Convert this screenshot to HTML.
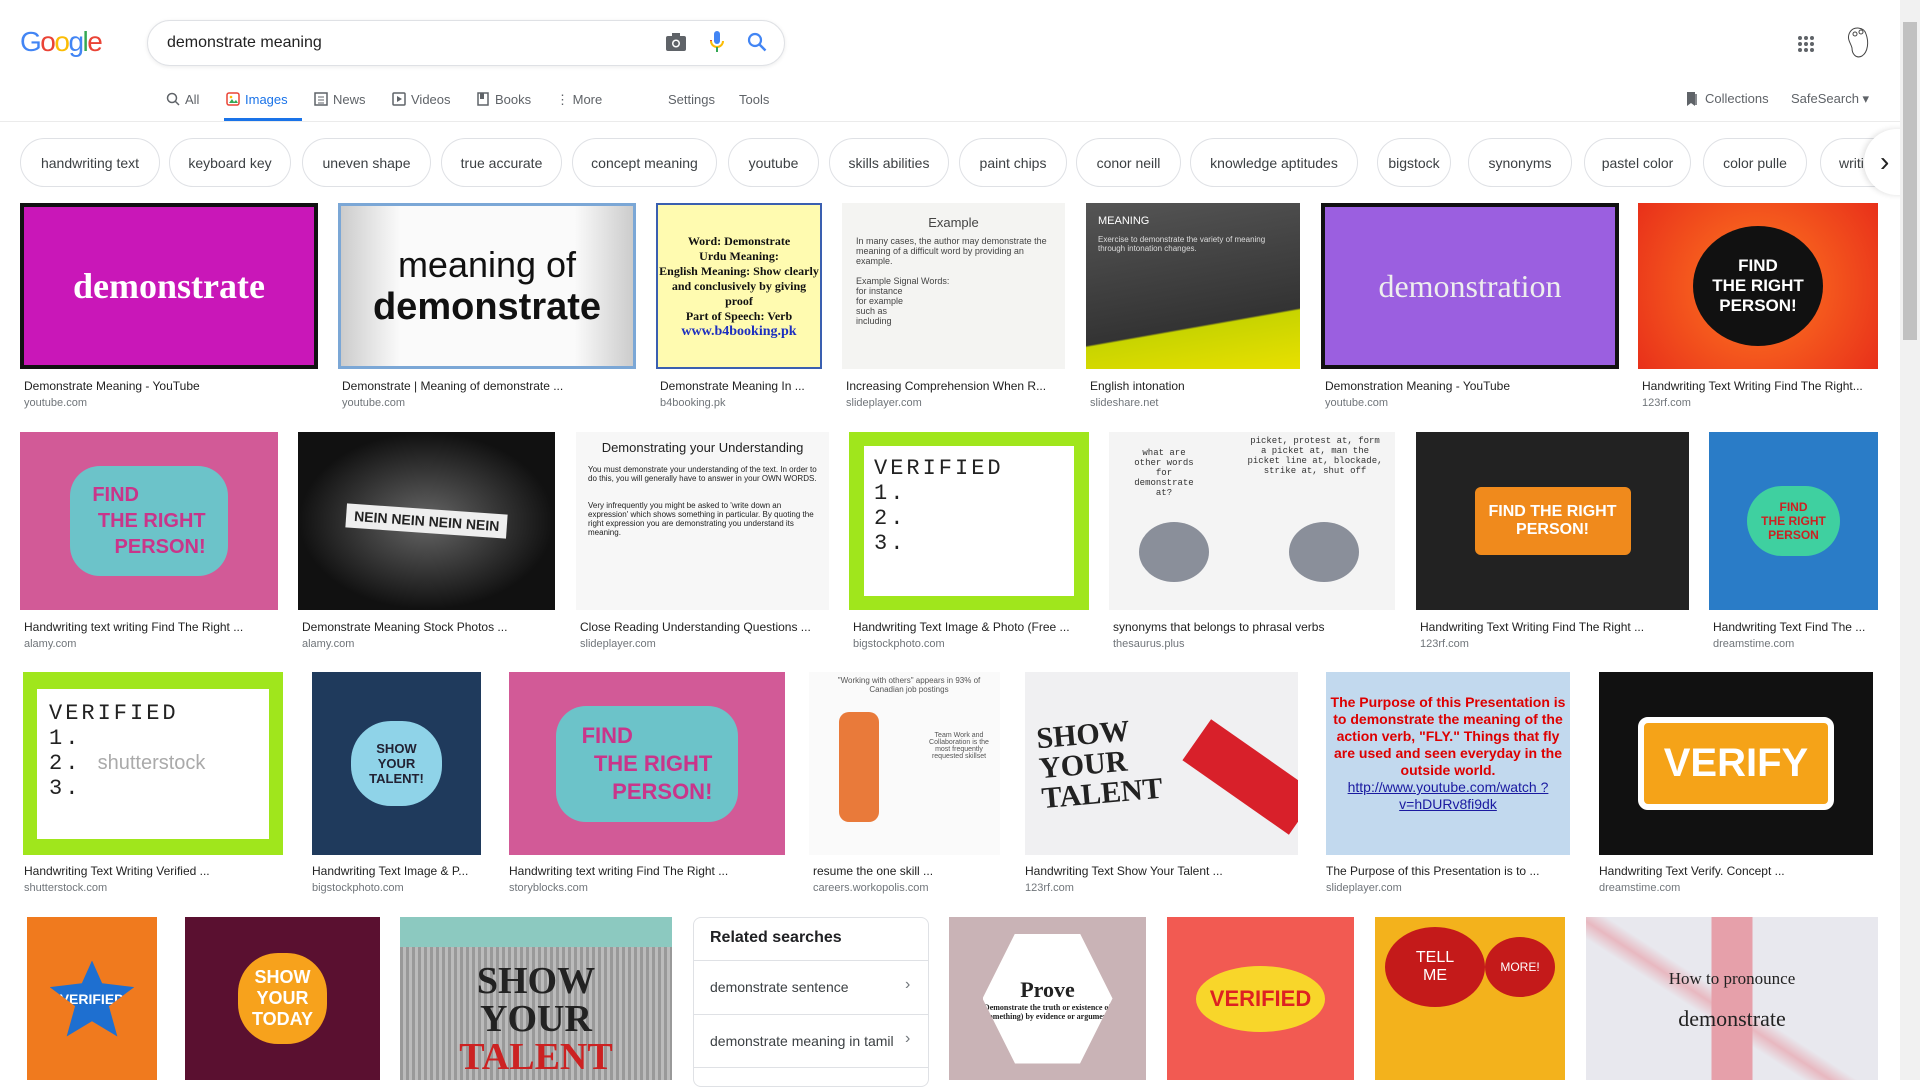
<!DOCTYPE html>
<html><head><meta charset="utf-8"><style>
*{margin:0;padding:0;box-sizing:border-box}
body{width:1920px;height:1080px;overflow:hidden;background:#fff;font-family:"Liberation Sans",Arial,sans-serif;position:relative}
.a{position:absolute}
.t{position:absolute;overflow:hidden;display:flex;align-items:center;justify-content:center;text-align:center}
.cap{position:absolute;font-size:12px;color:#222;white-space:nowrap;overflow:hidden}
.cap b{display:block;font-weight:normal;line-height:16px}
.cap i{display:block;font-style:normal;font-size:11px;color:#70757a;line-height:18px}
.chip{position:absolute;top:138px;height:49px;border:1px solid #dfe1e5;border-radius:25px;font-size:14px;color:#3c4043;display:flex;align-items:center;justify-content:center;background:#fff}
.tab{position:absolute;top:92px;font-size:13px;color:#5f6368}
</style></head><body>
<!-- header -->
<div class="a" style="left:20px;top:26px;font-size:28px;letter-spacing:-1.5px;font-family:'Liberation Sans',sans-serif"><span style="color:#4285f4">G</span><span style="color:#ea4335">o</span><span style="color:#fbbc05">o</span><span style="color:#4285f4">g</span><span style="color:#34a853">l</span><span style="color:#ea4335">e</span></div>
<div class="a" style="left:147px;top:20px;width:638px;height:46px;border:1px solid #dfe1e5;border-radius:24px;box-shadow:0 1px 4px rgba(0,0,0,.08)"></div>
<div class="a" style="left:167px;top:34px;font-size:16px;color:#222">demonstrate meaning</div>
<svg class="a" style="left:665px;top:32px" width="22" height="20" viewBox="0 0 22 20"><rect x="1" y="4" width="20" height="15" rx="2" fill="#5f6368"/><rect x="7" y="1" width="8" height="5" fill="#5f6368"/><circle cx="11" cy="11.5" r="4" fill="#fff"/><circle cx="11" cy="11.5" r="2.5" fill="#5f6368"/></svg>
<svg class="a" style="left:709px;top:30px" width="16" height="24" viewBox="0 0 16 24"><rect x="5" y="1" width="6" height="13" rx="3" fill="#4285f4"/><path d="M2 11a6 6 0 0 0 12 0" stroke="#fbbc05" stroke-width="2" fill="none"/><rect x="7" y="17" width="2" height="5" fill="#34a853"/><path d="M2 11v-1" stroke="#ea4335" stroke-width="2"/></svg>
<svg class="a" style="left:747px;top:32px" width="20" height="20" viewBox="0 0 20 20"><circle cx="8" cy="8" r="6" stroke="#4285f4" stroke-width="2.2" fill="none"/><path d="M12.5 12.5l6 6" stroke="#4285f4" stroke-width="2.4"/></svg>
<svg class="a" style="left:1797px;top:35px" width="18" height="18"><g fill="#5f6368"><circle cx="3" cy="3" r="2"/><circle cx="9" cy="3" r="2"/><circle cx="15" cy="3" r="2"/><circle cx="3" cy="9" r="2"/><circle cx="9" cy="9" r="2"/><circle cx="15" cy="9" r="2"/><circle cx="3" cy="15" r="2"/><circle cx="9" cy="15" r="2"/><circle cx="15" cy="15" r="2"/></g></svg>
<svg class="a" style="left:1842px;top:26px" width="30" height="34"><path d="M8 6c4-6 14-5 16 2 3 8 2 18-4 22-6 3-10-2-10-8-1-5-6-9-2-16z" fill="#fff" stroke="#444" stroke-width="1"/><circle cx="13" cy="8" r="2" fill="none" stroke="#444"/><circle cx="19" cy="6" r="2" fill="none" stroke="#444"/></svg>
<!-- tabs -->
<svg class="a" style="left:166px;top:92px" width="14" height="14"><circle cx="6" cy="6" r="4.5" stroke="#5f6368" stroke-width="1.5" fill="none"/><path d="M9 9l4 4" stroke="#5f6368" stroke-width="1.5"/></svg>
<div class="tab" style="left:185px">All</div>
<svg class="a" style="left:226px;top:92px" width="14" height="14"><rect x="1" y="1" width="12" height="12" rx="2" fill="none" stroke="#ea4335" stroke-width="1.5"/><path d="M3 11l3-4 2 3 2-2 2 3z" fill="#34a853"/><circle cx="5" cy="5" r="1.3" fill="#fbbc05"/></svg>
<div class="tab" style="left:245px;color:#1a73e8">Images</div>
<div class="a" style="left:224px;top:118px;width:78px;height:3px;background:#1a73e8"></div>
<svg class="a" style="left:314px;top:92px" width="14" height="14"><rect x="1" y="1" width="12" height="12" fill="none" stroke="#5f6368" stroke-width="1.5"/><path d="M4 5h6M4 8h6M4 11h6" stroke="#5f6368"/></svg>
<div class="tab" style="left:333px">News</div>
<svg class="a" style="left:392px;top:92px" width="14" height="14"><rect x="1" y="1" width="12" height="12" rx="1" fill="none" stroke="#5f6368" stroke-width="1.5"/><path d="M5 4l5 3-5 3z" fill="#5f6368"/></svg>
<div class="tab" style="left:411px">Videos</div>
<svg class="a" style="left:477px;top:92px" width="12" height="14"><rect x="1" y="1" width="10" height="12" fill="none" stroke="#5f6368" stroke-width="1.5"/><rect x="3" y="1" width="4" height="6" fill="#5f6368"/></svg>
<div class="tab" style="left:495px">Books</div>
<div class="tab" style="left:556px">&#8942; More</div>
<div class="tab" style="left:668px">Settings</div>
<div class="tab" style="left:739px">Tools</div>
<svg class="a" style="left:1686px;top:91px" width="12" height="16"><path d="M1 1h8v14l-4-3-4 3z" fill="#5f6368"/><path d="M10 3v11" stroke="#5f6368" stroke-width="1.5"/></svg>
<div class="tab" style="left:1705px;top:91px">Collections</div>
<div class="tab" style="left:1791px;top:91px">SafeSearch &#9662;</div>
<div class="a" style="left:0;top:121px;width:1900px;height:1px;background:#ebebeb"></div>
<!-- chips -->
<div class="chip" style="left:20px;width:140px">handwriting text</div>
<div class="chip" style="left:169px;width:122px">keyboard key</div>
<div class="chip" style="left:302px;width:129px">uneven shape</div>
<div class="chip" style="left:441px;width:121px">true accurate</div>
<div class="chip" style="left:572px;width:145px">concept meaning</div>
<div class="chip" style="left:728px;width:91px">youtube</div>
<div class="chip" style="left:829px;width:120px">skills abilities</div>
<div class="chip" style="left:959px;width:108px">paint chips</div>
<div class="chip" style="left:1076px;width:105px">conor neill</div>
<div class="chip" style="left:1190px;width:168px">knowledge aptitudes</div>
<div class="chip" style="left:1377px;width:74px">bigstock</div>
<div class="chip" style="left:1468px;width:104px">synonyms</div>
<div class="chip" style="left:1584px;width:107px">pastel color</div>
<div class="chip" style="left:1703px;width:104px">color pulle</div>
<div class="chip" style="left:1820px;width:80px;justify-content:flex-start;padding-left:18px">writi</div>
<div class="a" style="left:1864px;top:129px;width:50px;height:66px;border-radius:33px 0 0 33px;background:#fff;box-shadow:-2px 0 6px rgba(0,0,0,.12);font-size:28px;color:#222;line-height:66px;padding-left:16px">&#8250;</div>
<!-- scrollbar -->
<div class="a" style="left:1900px;top:0;width:20px;height:1080px;background:#f1f1f1"></div>
<div class="a" style="left:1903px;top:22px;width:14px;height:318px;background:#c1c1c1"></div>
<!-- row1 -->
<div class="t" style="left:20px;top:203px;width:298px;height:166px;background:#c917b8;border:4px solid #111;color:#fff;font:bold 36px 'Liberation Serif',serif">demonstrate</div>
<div class="t" style="left:338px;top:203px;width:298px;height:166px;background:linear-gradient(90deg,#ccc,#fafafa 20%,#fafafa 80%,#ccc);border:3px solid #7ba7d6;color:#111"><div style="font:36px 'Liberation Sans',sans-serif;line-height:42px">meaning of<br><b style="font-size:38px">demonstrate</b></div></div>
<div class="t" style="left:656px;top:203px;width:166px;height:166px;background:#fffbb0;border:2px solid #3a5fb0;color:#111"><div style="font:bold 12px 'Liberation Serif',serif;line-height:15px">Word: Demonstrate<br>Urdu Meaning:<br>English Meaning: Show clearly and conclusively by giving proof<br>Part of Speech: Verb<br><span style="color:#1d2fbf;font-size:14px">www.b4booking.pk</span></div></div>
<div class="t" style="left:842px;top:203px;width:223px;height:166px;background:#f4f4f2;color:#444;font-size:9px;align-items:flex-start;text-align:left;padding:12px 14px;flex-direction:column;justify-content:flex-start"><div style="font-size:13px;align-self:center;margin-bottom:6px">Example</div>In many cases, the author may demonstrate the meaning of a difficult word by providing an example.<br><br>Example Signal Words:<br>for instance<br>for example<br>such as<br>including</div>
<div class="t" style="left:1086px;top:203px;width:214px;height:166px;background:linear-gradient(170deg,#555 0%,#333 70%,#c8d400 71%,#e8e000);color:#ddd;font-size:8px;align-items:flex-start;justify-content:flex-start;text-align:left;padding:12px;flex-direction:column"><div style="font-size:11px;color:#fff;margin-bottom:8px">MEANING</div>Exercise to demonstrate the variety of meaning through intonation changes.</div>
<div class="t" style="left:1321px;top:203px;width:298px;height:166px;background:#9b5fe0;border:4px solid #111;color:#eee;font:32px 'Liberation Serif',serif">demonstration</div>
<div class="t" style="left:1638px;top:203px;width:240px;height:166px;background:radial-gradient(circle at 50% 50%,#ff7a20,#e8301a);"><div style="width:130px;height:120px;border-radius:50%;background:#111;color:#fff;font:bold 17px 'Liberation Sans';display:flex;align-items:center;justify-content:center">FIND<br>THE RIGHT<br>PERSON!</div></div>
<div class="cap" style="left:24px;top:378px;width:294px"><b>Demonstrate Meaning - YouTube</b><i>youtube.com</i></div>
<div class="cap" style="left:342px;top:378px;width:294px"><b>Demonstrate | Meaning of demonstrate ...</b><i>youtube.com</i></div>
<div class="cap" style="left:660px;top:378px;width:162px"><b>Demonstrate Meaning In ...</b><i>b4booking.pk</i></div>
<div class="cap" style="left:846px;top:378px;width:219px"><b>Increasing Comprehension When R...</b><i>slideplayer.com</i></div>
<div class="cap" style="left:1090px;top:378px;width:210px"><b>English intonation</b><i>slideshare.net</i></div>
<div class="cap" style="left:1325px;top:378px;width:294px"><b>Demonstration Meaning - YouTube</b><i>youtube.com</i></div>
<div class="cap" style="left:1642px;top:378px;width:236px"><b>Handwriting Text Writing Find The Right...</b><i>123rf.com</i></div>
<!-- row2 -->
<div class="t" style="left:20px;top:432px;width:258px;height:178px;background:#d25a97"><div style="background:#6cc3c9;color:#c9358a;font:bold 20px 'Liberation Sans';padding:16px 22px;border-radius:30px;text-align:left;line-height:26px">FIND<br>&nbsp;THE RIGHT<br>&nbsp;&nbsp;&nbsp;&nbsp;PERSON!</div></div>
<div class="t" style="left:298px;top:432px;width:257px;height:178px;background:radial-gradient(ellipse at 50% 50%,#666,#111 70%);color:#222;font:bold 14px 'Liberation Sans'"><div style="background:#eee;padding:4px 8px;transform:rotate(4deg)">NEIN NEIN NEIN NEIN</div></div>
<div class="t" style="left:576px;top:432px;width:253px;height:178px;background:#f7f7f7;color:#222;font-size:8px;flex-direction:column;justify-content:flex-start;text-align:left;padding:8px 12px"><div style="font-size:13px;margin-bottom:10px;align-self:center">Demonstrating your Understanding</div>You must demonstrate your understanding of the text. In order to do this, you will generally have to answer in your OWN WORDS.<br><br><br>Very infrequently you might be asked to 'write down an expression' which shows something in particular. By quoting the right expression you are demonstrating you understand its meaning.</div>
<div class="t" style="left:849px;top:432px;width:240px;height:178px;background:#a0e61c"><div style="width:210px;height:150px;background:#fff;color:#222;font:22px 'Liberation Mono';text-align:left;padding:10px;letter-spacing:3px">VERIFIED<br>1.<br>2.<br>3.</div></div>
<div class="t" style="left:1109px;top:432px;width:286px;height:178px;background:#f4f4f4;color:#333;font:9px 'Liberation Mono'"><div style="position:absolute;left:20px;top:16px;width:70px">what are other words for demonstrate at?</div><div style="position:absolute;right:10px;top:4px;width:140px">picket, protest at, form a picket at, man the picket line at, blockade, strike at, shut off</div><div style="position:absolute;left:30px;top:90px;width:70px;height:60px;border-radius:50%;background:#8a8f9a"></div><div style="position:absolute;left:180px;top:90px;width:70px;height:60px;border-radius:50%;background:#8a8f9a"></div></div>
<div class="t" style="left:1416px;top:432px;width:273px;height:178px;background:#222"><div style="background:#f08a1c;color:#fff;font:bold 16px 'Liberation Sans';padding:16px 14px;border-radius:6px">FIND THE RIGHT<br>PERSON!</div></div>
<div class="t" style="left:1709px;top:432px;width:169px;height:178px;background:#2a7cc7"><div style="background:#3fd0a0;color:#c22;font:bold 12px 'Liberation Sans';padding:14px;border-radius:40px">FIND<br>THE RIGHT<br>PERSON</div></div>
<div class="cap" style="left:24px;top:619px;width:254px"><b>Handwriting text writing Find The Right ...</b><i>alamy.com</i></div>
<div class="cap" style="left:302px;top:619px;width:253px"><b>Demonstrate Meaning Stock Photos ...</b><i>alamy.com</i></div>
<div class="cap" style="left:580px;top:619px;width:249px"><b>Close Reading Understanding Questions ...</b><i>slideplayer.com</i></div>
<div class="cap" style="left:853px;top:619px;width:236px"><b>Handwriting Text Image &amp; Photo (Free ...</b><i>bigstockphoto.com</i></div>
<div class="cap" style="left:1113px;top:619px;width:282px"><b>synonyms that belongs to phrasal verbs</b><i>thesaurus.plus</i></div>
<div class="cap" style="left:1420px;top:619px;width:269px"><b>Handwriting Text Writing Find The Right ...</b><i>123rf.com</i></div>
<div class="cap" style="left:1713px;top:619px;width:165px"><b>Handwriting Text Find The ...</b><i>dreamstime.com</i></div>
<!-- row3 -->
<div class="t" style="left:23px;top:672px;width:260px;height:183px;background:#a0e61c"><div style="width:232px;height:150px;background:#fff;color:#222;font:22px 'Liberation Mono';text-align:left;padding:12px;letter-spacing:3px">VERIFIED<br>1.<br>2. <span style="color:#aaa;font:20px 'Liberation Sans';letter-spacing:0">shutterstock</span><br>3.</div></div>
<div class="t" style="left:312px;top:672px;width:169px;height:183px;background:#1f3a5c"><div style="background:#8fd3e8;color:#223;font:bold 13px 'Liberation Sans';padding:20px 18px;border-radius:40px">SHOW<br>YOUR<br>TALENT!</div></div>
<div class="t" style="left:509px;top:672px;width:276px;height:183px;background:#d25a97"><div style="background:#6cc3c9;color:#c9358a;font:bold 22px 'Liberation Sans';padding:16px 26px;border-radius:30px;text-align:left;line-height:28px">FIND<br>&nbsp;&nbsp;THE RIGHT<br>&nbsp;&nbsp;&nbsp;&nbsp;&nbsp;PERSON!</div></div>
<div class="t" style="left:809px;top:672px;width:191px;height:183px;background:#fafafa;color:#555;font-size:8px"><div style="position:absolute;left:20px;top:4px;width:160px">"Working with others" appears in 93% of Canadian job postings</div><div style="position:absolute;left:30px;top:40px;width:40px;height:110px;background:#e97a3a;border-radius:10px"></div><div style="position:absolute;left:120px;top:60px;width:60px;font-size:7px">Team Work and Collaboration is the most frequently requested skillset</div></div>
<div class="t" style="left:1025px;top:672px;width:273px;height:183px;background:#f0f0f2;color:#222;font:bold 30px 'Liberation Serif';text-align:left;justify-content:flex-start;padding-left:14px;line-height:30px"><div style="transform:rotate(-5deg)">SHOW<br>YOUR<br>TALENT</div><div style="position:absolute;left:160px;top:80px;width:130px;height:50px;background:#d8202a;transform:rotate(35deg)"></div></div>
<div class="t" style="left:1326px;top:672px;width:244px;height:183px;background:#c2d9ee;color:#d00;font:bold 14px 'Liberation Sans';flex-direction:column;justify-content:flex-start;padding-top:22px;line-height:17px">The Purpose of this Presentation is to demonstrate the meaning of the action verb, "FLY." Things that fly are used and seen everyday in the outside world.<span style="color:#1a1aa0;text-decoration:underline;font-weight:normal">http://www.youtube.com/watch ?v=hDURv8fi9dk</span></div>
<div class="t" style="left:1599px;top:672px;width:274px;height:183px;background:#111"><div style="background:#f5a318;color:#fff;font:bold 40px 'Liberation Sans';padding:18px 20px;border:6px solid #fff;border-radius:10px">VERIFY</div></div>
<div class="cap" style="left:24px;top:863px;width:259px"><b>Handwriting Text Writing Verified ...</b><i>shutterstock.com</i></div>
<div class="cap" style="left:312px;top:863px;width:169px"><b>Handwriting Text Image &amp; P...</b><i>bigstockphoto.com</i></div>
<div class="cap" style="left:509px;top:863px;width:276px"><b>Handwriting text writing Find The Right ...</b><i>storyblocks.com</i></div>
<div class="cap" style="left:813px;top:863px;width:187px"><b>resume the one skill ...</b><i>careers.workopolis.com</i></div>
<div class="cap" style="left:1025px;top:863px;width:273px"><b>Handwriting Text Show Your Talent ...</b><i>123rf.com</i></div>
<div class="cap" style="left:1326px;top:863px;width:244px"><b>The Purpose of this Presentation is to ...</b><i>slideplayer.com</i></div>
<div class="cap" style="left:1599px;top:863px;width:274px"><b>Handwriting Text Verify. Concept ...</b><i>dreamstime.com</i></div>
<!-- row4 -->
<div class="t" style="left:27px;top:917px;width:130px;height:163px;background:#f07a1e"><div style="background:#1e6fd0;color:#fff;font:bold 14px 'Liberation Sans';padding:30px 10px;clip-path:polygon(50% 0,62% 30%,100% 35%,70% 60%,80% 100%,50% 80%,20% 100%,30% 60%,0 35%,38% 30%)">VERIFIED</div></div>
<div class="t" style="left:185px;top:917px;width:195px;height:163px;background:#5a1030"><div style="background:#f7a21c;color:#fff;font:bold 18px 'Liberation Sans';padding:14px;border-radius:40px">SHOW<br>YOUR<br>TODAY</div></div>
<div class="t" style="left:400px;top:917px;width:272px;height:163px;background:repeating-linear-gradient(90deg,#999 0 3px,#bbb 3px 6px);color:#222;font:bold 38px 'Liberation Serif';line-height:38px"><div style="position:absolute;left:0;top:0;width:100%;height:30px;background:#8cc9c0"></div><div style="position:relative;top:20px">SHOW<br>YOUR<br><span style="color:#c22">TALENT</span></div></div>
<div class="a" style="left:693px;top:917px;width:236px;height:170px;border:1px solid #dfe1e5;border-radius:8px;background:#fff"></div>
<div class="a" style="left:710px;top:929px;font-size:16px;font-weight:bold;color:#202124">Related searches</div>
<div class="a" style="left:693px;top:960px;width:236px;height:1px;background:#dfe1e5"></div>
<div class="a" style="left:710px;top:979px;font-size:14px;color:#3c4043">demonstrate sentence</div>
<div class="a" style="left:905px;top:976px;font-size:16px;color:#70757a">&#8250;</div>
<div class="a" style="left:693px;top:1014px;width:236px;height:1px;background:#dfe1e5"></div>
<div class="a" style="left:710px;top:1033px;font-size:14px;color:#3c4043">demonstrate meaning in tamil</div>
<div class="a" style="left:905px;top:1030px;font-size:16px;color:#70757a">&#8250;</div>
<div class="a" style="left:693px;top:1067px;width:236px;height:1px;background:#dfe1e5"></div>
<div class="t" style="left:949px;top:917px;width:197px;height:163px;background:#c9b3b6"><div style="width:130px;height:130px;background:#fff;clip-path:polygon(25% 0,75% 0,100% 50%,75% 100%,25% 100%,0 50%);color:#222;font:bold 22px 'Liberation Serif';display:flex;flex-direction:column;align-items:center;justify-content:center">Prove<span style="font-size:8px">Demonstrate the truth or existence of (something) by evidence or argument.</span></div></div>
<div class="t" style="left:1167px;top:917px;width:187px;height:163px;background:#f25a52"><div style="background:#f8d62a;color:#d22;font:bold 22px 'Liberation Sans';padding:20px 14px;border-radius:50%">VERIFIED</div></div>
<div class="t" style="left:1375px;top:917px;width:190px;height:163px;background:#f3b21c"><div style="position:absolute;left:10px;top:10px;width:100px;height:80px;border-radius:50%;background:#c41a1a;color:#fff;font:16px 'Liberation Sans';display:flex;align-items:center;justify-content:center">TELL<br>ME</div><div style="position:absolute;left:110px;top:20px;width:70px;height:60px;border-radius:50%;background:#c41a1a;color:#fff;font:12px 'Liberation Sans';display:flex;align-items:center;justify-content:center">MORE!</div></div>
<div class="t" style="left:1586px;top:917px;width:292px;height:163px;background:linear-gradient(33deg,#e8e8ee 40%,#e8b8c0 45%,#e8e8ee 50%),#eee;color:#222;font:17px 'Liberation Serif';flex-direction:column;line-height:40px"><div style="position:absolute;left:0;top:0;width:100%;height:100%;background:linear-gradient(90deg,transparent 43%,#e6a0aa 43%,#e6a0aa 57%,transparent 57%)"></div><div style="position:relative">How to pronounce</div><div style="position:relative;font-size:22px">demonstrate</div></div>
</body></html>
